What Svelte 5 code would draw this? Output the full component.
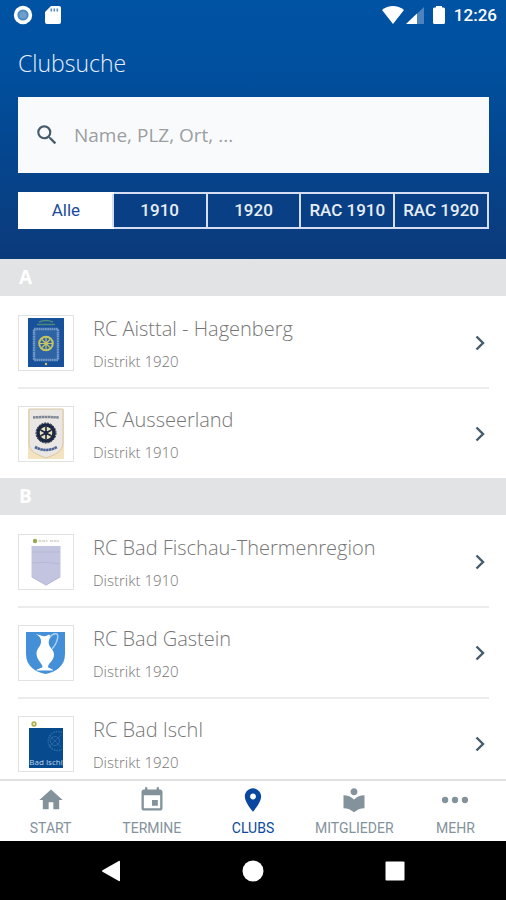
<script lang="ts">
	const filters = ['Alle', '1910', '1920', 'RAC 1910', 'RAC 1920'];

	const sections = [
		{
			letter: 'A',
			clubs: [
				{ name: 'RC Aisttal - Hagenberg', district: 'Distrikt 1920', pennant: 'aisttal' },
				{ name: 'RC Ausseerland', district: 'Distrikt 1910', pennant: 'ausseerland' },
			],
		},
		{
			letter: 'B',
			clubs: [
				{ name: 'RC Bad Fischau-Thermenregion', district: 'Distrikt 1910', pennant: 'fischau' },
				{ name: 'RC Bad Gastein', district: 'Distrikt 1920', pennant: 'gastein' },
				{ name: 'RC Bad Ischl', district: 'Distrikt 1920', pennant: 'ischl' },
			],
		},
	];

	const tabs = [
		{ label: 'START', href: '#start', icon: 'M10 20v-6h4v6h5v-8h3L12 3 2 12h3v8z' },
		{
			label: 'TERMINE',
			href: '#termine',
			icon: 'M17 12h-5v5h5v-5zM16 1v2H8V1H6v2H5c-1.11 0-1.99.9-1.99 2L3 19c0 1.1.89 2 2 2h14c1.1 0 2-.9 2-2V5c0-1.1-.9-2-2-2h-1V1h-2zm3 18H5V8h14v11z',
		},
		{
			label: 'CLUBS',
			href: '#clubs',
			icon: 'M12 2C8.13 2 5 5.13 5 9c0 5.25 7 13 7 13s7-7.75 7-13c0-3.87-3.13-7-7-7zm0 9.5c-1.38 0-2.5-1.12-2.5-2.5s1.12-2.5 2.5-2.5 2.5 1.12 2.5 2.5-1.12 2.5-2.5 2.5z',
		},
		{
			label: 'MITGLIEDER',
			href: '#mitglieder',
			icon: 'M12 11.55C9.64 9.35 6.48 8 3 8v11c3.48 0 6.64 1.35 9 3.55 2.36-2.19 5.52-3.55 9-3.55V8c-3.48 0-6.64 1.35-9 3.55zM12 8c1.66 0 3-1.34 3-3s-1.34-3-3-3-3 1.34-3 3 1.34 3 3 3z',
		},
		{
			label: 'MEHR',
			href: '#mehr',
			icon: 'M3.500 9.3a2.7 2.7 0 1 0 0 5.4 2.7 2.7 0 0 0 0-5.4zm8.500 0a2.7 2.7 0 1 0 0 5.4 2.7 2.7 0 0 0 0-5.4zm8.500 0a2.7 2.7 0 1 0 0 5.4 2.7 2.7 0 0 0 0-5.4z',
		},
	];

	let query = $state('');
	let activeFilter = $state('Alle');
	let activeTab = $state('CLUBS');
</script>

<div class="app">
	<header class="header">
		<div class="status-bar">
			<svg width="20" height="20" viewBox="0 0 20 20" aria-hidden="true">
				<circle cx="10" cy="10" r="9.2" fill="#fff" />
				<circle cx="10" cy="10" r="5.6" fill="#4d8bc4" />
				<circle cx="10" cy="10" r="3.5" fill="#6f9fcb" />
			</svg>
			<svg class="sd-card" width="16" height="20" viewBox="0 0 16 20" aria-hidden="true">
				<path d="M6 1h8a2 2 0 0 1 2 2v14a2 2 0 0 1-2 2H2a2 2 0 0 1-2-2V7z" fill="#fff" />
				<path d="M5.5 3.500h1.6v3H5.500zM8.500 3.500h1.6v3H8.500zM11.500 3.500h1.6v3h-1.6z" fill="#5b8cc2" />
			</svg>
			<span class="spacer"></span>
			<svg width="22" height="20" viewBox="0 0 22 20" aria-hidden="true">
				<path d="M0 5C6.500-.3 15.500-.3 22 5L11 19z" fill="#fff" />
			</svg>
			<svg class="signal" width="18" height="20" viewBox="0 0 18 20" aria-hidden="true">
				<path d="M18 2v17H0z" fill="#4d84bd" />
				<path d="M11 8.600V19H0z" fill="#fff" />
			</svg>
			<svg class="battery" width="12" height="20" viewBox="0 0 12 20" aria-hidden="true">
				<path d="M3 1h6v1.500h1.500A1.500 1.500 0 0 1 12 4v13.500a1.500 1.500 0 0 1-1.500 1.500h-9A1.500 1.500 0 0 1 0 17.500V4A1.500 1.500 0 0 1 1.500 2.500H3z" fill="#fff" />
			</svg>
			<span class="clock">12:26</span>
		</div>

		<h1>Clubsuche</h1>

		<label class="search">
			<svg width="26" height="26" viewBox="0 0 24 24" aria-hidden="true">
				<path
					fill="#465b6b"
					d="M15.500 14h-.79l-.28-.27A6.471 6.471 0 0 0 16 9.500 6.500 6.500 0 1 0 9.500 16c1.610 0 3.090-.59 4.230-1.570l.27.28v.79l5 4.990L20.490 19l-4.990-5zm-6 0C7.010 14 5 11.990 5 9.500S7.010 5 9.500 5 14 7.010 14 9.500 11.990 14 9.500 14z"
				/>
			</svg>
			<input type="text" aria-label="Clubsuche" placeholder="Name, PLZ, Ort, ..." bind:value={query} />
		</label>

		<div class="filters">
			{#each filters as filter}
				<button class:active={filter === activeFilter} onclick={() => (activeFilter = filter)}>{filter}</button>
			{/each}
		</div>
	</header>

	<main class="list">
		{#each sections as section}
			<section>
				<h2>{section.letter}</h2>
				<ul>
					{#each section.clubs as club}
						<li>
							<a class="club" href="#{club.pennant}">
								<span class="thumb">{@render pennant(club.pennant)}</span>
								<span class="info">
									<span class="name">{club.name}</span>
									<span class="district">{club.district}</span>
								</span>
								<svg class="chevron" width="10" height="16" viewBox="0 0 10 16" aria-hidden="true">
									<path d="M1.500 1.500L8 8l-6.500 6.500" fill="none" stroke="#465b6b" stroke-width="2.400" />
								</svg>
							</a>
						</li>
					{/each}
				</ul>
			</section>
		{/each}
	</main>

	<nav class="tabs">
		{#each tabs as tab}
			<a href={tab.href} class:active={tab.label === activeTab} onclick={() => (activeTab = tab.label)}>
				<svg width="28" height="28" viewBox="0 0 24 24" aria-hidden="true"><path d={tab.icon} fill="currentColor" /></svg>
				<span>{tab.label}</span>
			</a>
		{/each}
	</nav>

	<div class="system-bar">
		<button aria-label="Zurück">
			<svg width="22" height="22" viewBox="0 0 22 22"><path d="M20 1.500v19a.8.8 0 0 1-1.200.5L2.500 11.700a.8.8 0 0 1 0-1.400L18.800 1a.8.8 0 0 1 1.200.5z" fill="#fff" /></svg>
		</button>
		<button aria-label="Startbildschirm">
			<svg width="22" height="22" viewBox="0 0 22 22"><circle cx="11" cy="11" r="10.500" fill="#fff" /></svg>
		</button>
		<button aria-label="Übersicht">
			<svg width="22" height="22" viewBox="0 0 22 22"><rect x="1.500" y="1.500" width="19" height="19" rx="1" fill="#fff" /></svg>
		</button>
	</div>
</div>

{#snippet pennant(kind: string)}
	<svg width="54" height="54" viewBox="0 0 54 54" aria-hidden="true">
		{#if kind === 'aisttal'}
			<rect x="9" y="2" width="36" height="49" fill="#17509b" />
			<path d="M20 6q7-3 14 0M18 8.500h18" fill="none" stroke="#4f8a78" stroke-width="1.500" />
			<rect x="15" y="13" width="24" height="31" fill="#2e63a6" stroke="#7298c5" stroke-width="2.500" stroke-dasharray="1.800 .4" />
			<circle cx="27" cy="27.500" r="6.800" fill="none" stroke="#c5c463" stroke-width="2" />
			<path d="M27 22v11M21 27.500h12M23 23.500l8 8M31 23.500l-8 8" stroke="#c5c463" stroke-width="1.200" />
			<circle cx="27" cy="48" r="1.200" fill="#e0c24a" />
		{:else if kind === 'ausseerland'}
			<rect x="9" y="2" width="36" height="50" fill="#f4e3c0" />
			<path d="M10 2h34v34c0 9-9 12-17 15-8-3-17-6-17-15z" fill="#e9e6e3" stroke="#d8c7a4" />
			<path d="M14 10.500q13-1 26 0" fill="none" stroke="#7f8694" stroke-width="2.500" stroke-dasharray="2.500 .4" />
			<circle cx="27" cy="26" r="8" fill="#e8dfbd" stroke="#1c2741" stroke-width="3.500" />
			<circle cx="27" cy="26" r="10" fill="none" stroke="#1c2741" stroke-width="1" stroke-dasharray="2 1" />
			<path d="M27 20v12M21.500 23l11 6M32.500 23l-11 6" stroke="#1c2741" stroke-width="1.600" />
			<circle cx="27" cy="26" r="2.200" fill="#1c2741" />
			<path d="M16 40q11 6 22 0" fill="none" stroke="#4a6296" stroke-width="2.600" stroke-dasharray="2.500 .4" />
		{:else if kind === 'fischau'}
			<circle cx="16" cy="6" r="2.200" fill="#9ca653" />
			<path d="M19.500 6h9M31 6h9" stroke="#cfd2c8" stroke-width="1.500" stroke-dasharray="3 .7" />
			<path d="M12.500 11h29v31L27 50.500 12.500 42z" fill="#c3c4df" />
			<path d="M13 17h28M13 28q14-2 28 1M13 42l14 8 14-8" fill="none" stroke="#b3b5d3" stroke-width=".8" />
		{:else if kind === 'gastein'}
			<path d="M7 6h39v22c0 12-9 18-19.500 20C16 46 7 40 7 28z" fill="#4490d8" />
			<path
				d="M17 8l5 1.500q4 2 8-1l2 2q-3 4-2 8c1 4 5 5 5 10 0 6-5 8-6 12 0 2 5 2 5 4H17.500c0-2 6-2 6-4-1-4-6-7-6-13 0-5 4-7 4.500-11 .3-4-1-6-5-8.500z"
				fill="#fff"
			/>
			<path d="M31 11q3-4 7-3 2 2-1 9-2 4-4 6" fill="none" stroke="#a9d0f2" stroke-width="1.500" />
		{:else}
			<circle cx="15" cy="7" r="1.900" fill="#ecebb0" stroke="#a9ac4b" stroke-width="1.500" />
			<rect x="10" y="11" width="34" height="40" fill="#074a8d" />
			<path d="M43 15.500a9.500 9.500 0 1 0 0 17" fill="none" stroke="#2c6ba7" stroke-width="1.600" stroke-dasharray="1.500 1" />
			<circle cx="36" cy="24" r="4.500" fill="none" stroke="#2c6ba7" />
			<path d="M30 18l12 12M42 18L30 30" stroke="#2c6ba7" stroke-width=".8" />
			<text class="pennant-text" x="27" y="48" text-anchor="middle">Bad Ischl</text>
		{/if}
	</svg>
{/snippet}

<style>
	:global(body) {
		margin: 0;
	}

	.app {
		display: flex;
		flex-direction: column;
		height: 100vh;
		background: #fff;
		color: #767676;
		font-family: 'Open Sans', sans-serif;
	}

	svg {
		display: block;
		flex-shrink: 0;
	}

	.header {
		flex-shrink: 0;
		padding: 0 17px 30px 18px;
		background: linear-gradient(#0052a3, #00509f 25%, #0b3a7b);
		color: #fff;
	}

	.status-bar {
		display: flex;
		align-items: center;
		height: 30px;
		margin: 0 -8px 0 -5px;
	}

	.sd-card {
		margin-left: 12px;
	}

	.spacer {
		flex: 1;
	}

	.signal {
		margin-left: 2px;
	}

	.battery {
		margin-left: 9px;
	}

	.clock {
		margin-left: 9px;
		font: 500 17px/30px Roboto, sans-serif;
	}

	h1 {
		margin: 18px 0;
		color: #e6effa;
		font-size: 23px;
		font-weight: 300;
		line-height: 31px;
	}

	.search {
		display: flex;
		align-items: center;
		gap: 14px;
		height: 76px;
		padding: 0 16px;
		box-sizing: border-box;
		background: #f9fafb;
	}

	.search input {
		flex: 1;
		min-width: 0;
		padding: 0;
		border: 0;
		outline: 0;
		background: none;
		color: #465b6b;
		font: 400 19px/28px 'Open Sans', sans-serif;
	}

	.search input::placeholder {
		color: #9b9fa2;
		opacity: 1;
	}

	.filters {
		display: flex;
		height: 37px;
		margin-top: 19px;
		box-sizing: border-box;
		border: 2px solid #d5def2;
	}

	.filters button {
		flex: 1 1 0;
		padding: 0;
		border: 0;
		border-left: 2px solid #d5def2;
		background: #093f84;
		color: #e6edf7;
		font: 500 17px/33px Roboto, sans-serif;
		white-space: nowrap;
	}

	.filters button:first-child {
		border-left: 0;
	}

	.filters button.active {
		background: #fff;
		color: #1c4b9c;
		font-weight: 400;
		box-shadow: 0 0 0 2px #fff;
	}

	.list {
		flex: 1;
		min-height: 0;
		overflow: hidden;
	}

	h2 {
		margin: 0;
		padding: 0 19px;
		background: #e2e3e5;
		color: #fff;
		font-size: 19px;
		font-weight: 700;
		line-height: 37px;
	}

	ul {
		margin: 0;
		padding: 0 17px 0 18px;
		list-style: none;
	}

	li + li {
		box-shadow: inset 0 2px #ececed;
	}

	.club {
		display: flex;
		align-items: center;
		height: 91px;
		padding: 2px 4px 0 0;
		box-sizing: border-box;
		color: inherit;
		text-decoration: none;
	}

	.thumb {
		border: 1px solid #e2e2e2;
	}

	.info {
		display: flex;
		flex: 1;
		flex-direction: column;
		gap: 8px;
		margin-left: 19px;
	}

	.name {
		font-size: 20px;
		font-weight: 300;
		line-height: 28px;
	}

	.district {
		font-size: 15px;
		font-weight: 300;
		line-height: 20px;
	}

	.pennant-text {
		fill: #bfd4ea;
		font-size: 8px;
	}

	.tabs {
		display: flex;
		flex-shrink: 0;
		height: 62px;
		box-sizing: border-box;
		border-top: 2px solid #dfe1e2;
	}

	.tabs a {
		display: flex;
		flex: 1 1 0;
		flex-direction: column;
		align-items: center;
		gap: 5px;
		padding-top: 5px;
		color: #84929b;
		font: 400 14px/18px Roboto, sans-serif;
		text-decoration: none;
	}

	.tabs a.active {
		color: #0a48a0;
	}

	.system-bar {
		display: flex;
		flex-shrink: 0;
		align-items: center;
		justify-content: center;
		gap: 120px;
		height: 59px;
		background: #000;
	}

	.system-bar button {
		padding: 0;
		border: 0;
		background: none;
	}
</style>
